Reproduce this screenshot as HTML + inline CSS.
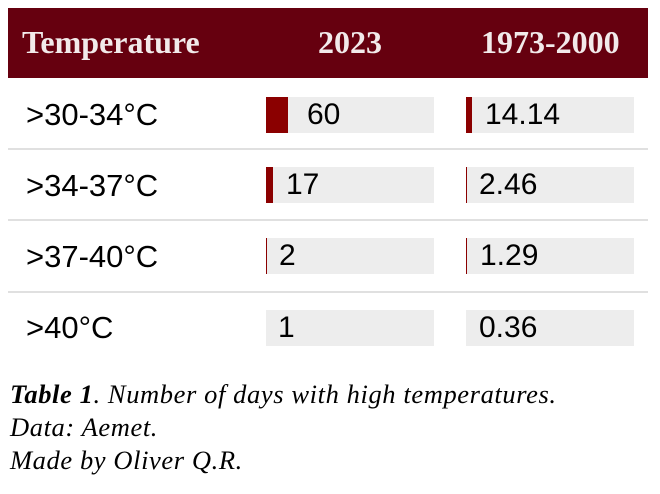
<!DOCTYPE html>
<html><head><style>
body{margin:0;background:#fff;width:660px;height:494px;position:relative;overflow:hidden;font-family:"Liberation Sans",Arial,sans-serif}
.hdr{position:absolute;left:8px;top:8px;width:640px;height:70px;background:#66000f;color:#f2eaea;font-family:"Liberation Serif",serif;font-weight:bold;font-size:32px}
.hdr span{position:absolute;top:16px}
.lbl{position:absolute;left:26px;font-size:31px;color:#000}
.box{position:absolute;width:168px;height:36px;background:#ededed}
.bar{position:absolute;left:0;top:0;height:36px;background:#8b0000}
.val{position:absolute;top:1px;font-size:30px;color:#000}
.sep{position:absolute;left:8px;width:640px;height:2px;background:#e0e0e0}
.cap{position:absolute;left:10px;top:378px;font-family:"Liberation Serif",serif;font-style:italic;font-size:26.5px;line-height:33px;letter-spacing:0.6px;color:#000;white-space:nowrap}
</style></head><body>
<div class="hdr"><span style="left:14px">Temperature</span><span style="left:310px">2023</span><span style="left:473px">1973-2000</span></div>

<div class="lbl" style="top:97px">&gt;30-34°C</div>
<div class="box" style="left:266px;top:97px"><div class="bar" style="width:22px"></div><div class="val" style="left:41px">60</div></div>
<div class="box" style="left:466px;top:97px"><div class="bar" style="width:6px"></div><div class="val" style="left:19px">14.14</div></div>
<div class="sep" style="top:148px"></div>

<div class="lbl" style="top:168px">&gt;34-37°C</div>
<div class="box" style="left:266px;top:167px"><div class="bar" style="width:7px"></div><div class="val" style="left:20px">17</div></div>
<div class="box" style="left:466px;top:167px"><div class="bar" style="width:1px"></div><div class="val" style="left:13px">2.46</div></div>
<div class="sep" style="top:219px"></div>

<div class="lbl" style="top:239px">&gt;37-40°C</div>
<div class="box" style="left:266px;top:238px"><div class="bar" style="width:1px"></div><div class="val" style="left:13px">2</div></div>
<div class="box" style="left:466px;top:238px"><div class="bar" style="width:1px"></div><div class="val" style="left:14px">1.29</div></div>
<div class="sep" style="top:291px"></div>

<div class="lbl" style="top:310px">&gt;40°C</div>
<div class="box" style="left:266px;top:310px"><div class="val" style="left:12px">1</div></div>
<div class="box" style="left:466px;top:310px"><div class="val" style="left:13px">0.36</div></div>

<div class="cap"><b>Table 1</b>. Number of days with high temperatures.<br>Data: Aemet.<br>Made by Oliver Q.R.</div>
</body></html>
